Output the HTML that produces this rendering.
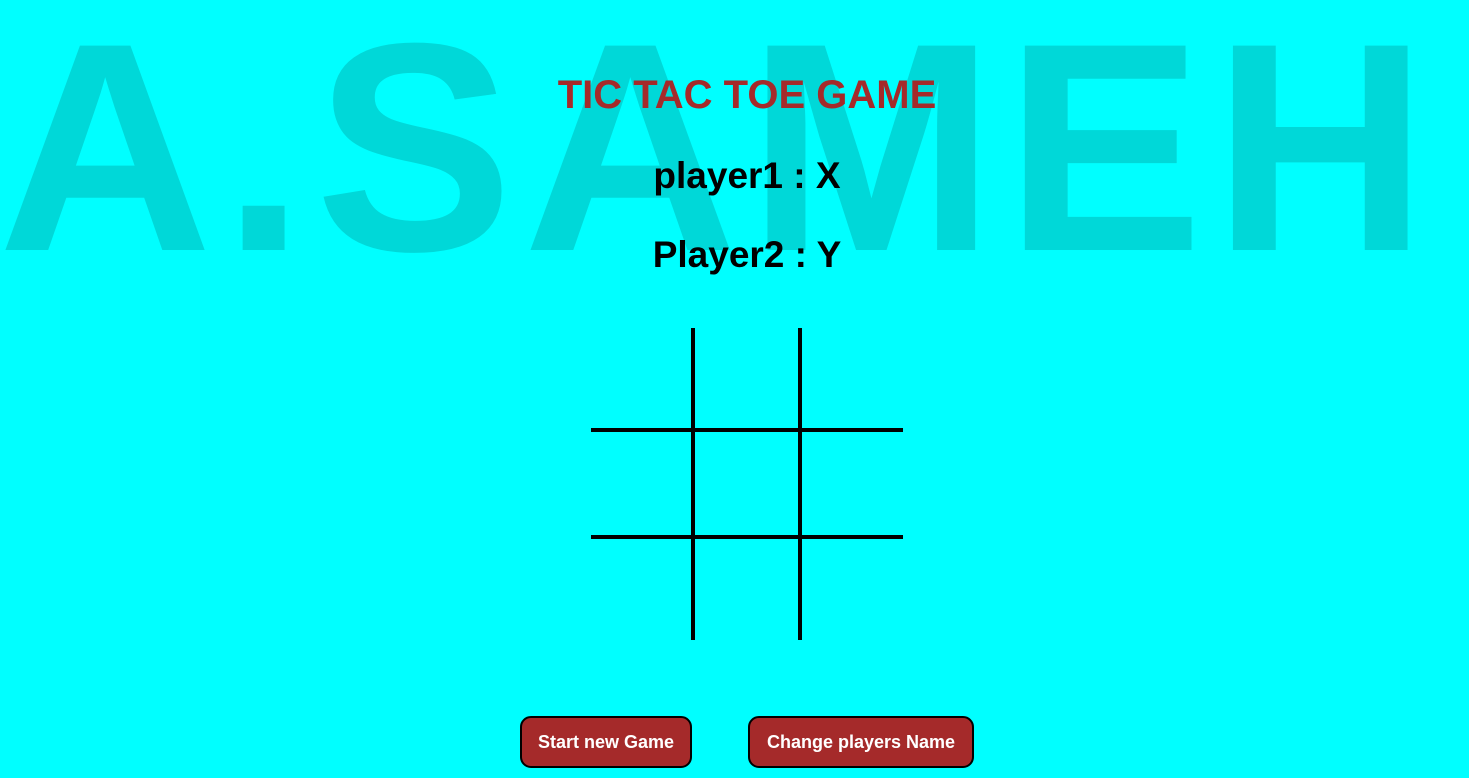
<!DOCTYPE html>
<html><head><style>
html,body{margin:0;padding:0;width:1469px;height:778px;background:#00ffff;overflow:hidden;position:relative;font-family:"Liberation Sans",Arial,sans-serif;}
.bg{position:absolute;left:-2px;top:0;font-weight:bold;font-size:297px;line-height:297px;color:#00d8d8;white-space:nowrap;letter-spacing:10px;}
.t{position:absolute;left:0;width:1494px;text-align:center;font-weight:bold;white-space:nowrap;}
.v{position:absolute;background:#000;}
.btn{position:absolute;top:716px;height:48px;background:#a52a2a;border:2px solid #000;border-radius:11px;color:#fff;font-weight:bold;font-size:18px;line-height:48px;text-align:center;box-sizing:content-box;}
</style></head><body>
<div class="bg" style="top:-1px">A.SAMEH</div>
<div class="t" style="top:71px;font-size:40px;line-height:48px;color:#a52a2a;">TIC TAC TOE GAME</div>
<div class="t" style="top:154px;font-size:37px;line-height:44px;color:#000;">player1 : X</div>
<div class="t" style="top:233px;font-size:37px;line-height:44px;color:#000;">Player2 : Y</div>
<div class="v" style="left:691px;top:328px;width:4px;height:312px"></div>
<div class="v" style="left:798px;top:328px;width:4px;height:312px"></div>
<div class="v" style="left:591px;top:428px;width:312px;height:4px"></div>
<div class="v" style="left:591px;top:535px;width:312px;height:4px"></div>
<div class="btn" style="left:520px;width:168px;">Start new Game</div>
<div class="btn" style="left:748px;width:222px;">Change players Name</div>
</body></html>
